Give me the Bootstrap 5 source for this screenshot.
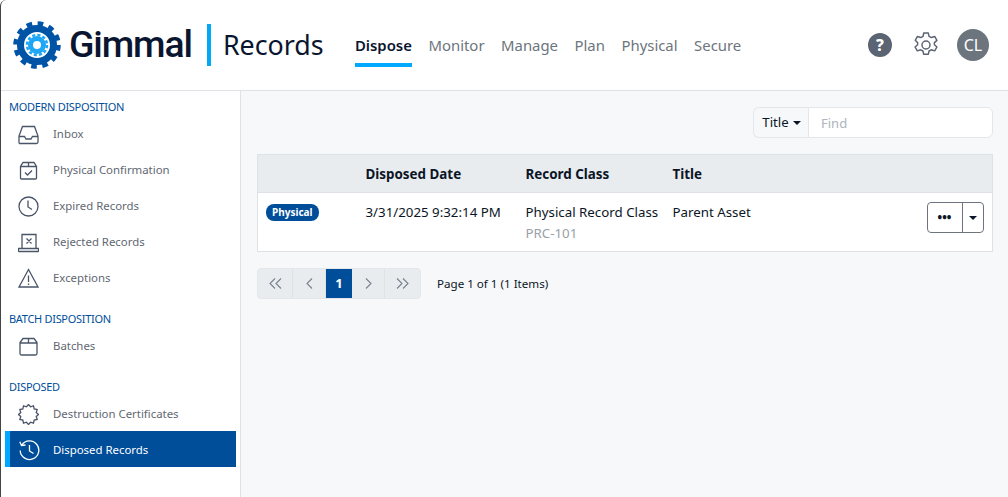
<!DOCTYPE html>
<html lang="en">
<head>
<meta charset="utf-8">
<title>Gimmal Records</title>
<link href="https://cdn.jsdelivr.net/npm/bootstrap@5.3.0/dist/css/bootstrap.min.css" rel="stylesheet">
<style>
html,body{height:100%;overflow:hidden}
body{font-family:"Noto Sans","Open Sans",sans-serif;font-size:13.3px;color:#0b1526;background:#fff}
.app-frame{height:497px;display:flex;flex-direction:column;border-left:1px solid #444;border-top-left-radius:6px}
.top-bar{height:91px;flex:none;border-bottom:1px solid #dee2e6;padding-left:11px;padding-right:19px}
.brand-name{font-family:Roboto,"Liberation Sans",sans-serif;font-weight:500;font-size:37.3px;letter-spacing:-1.1px;color:#0a1630;line-height:1;margin-left:7px}
.brand-rule{width:4px;height:42px;background:#00a9f4;margin-left:15px;margin-right:12px}
.brand-app{font-size:26.8px;line-height:1;color:#0a1630;width:132px}
.main-nav{gap:16.5px;height:91px}
.main-nav a{font-size:14.9px;color:#6c757d;text-decoration:none;height:91px;padding-top:34px;line-height:22px;position:relative}
.main-nav a.on{color:#0a1630;font-weight:600}
.main-nav a.on::after{content:"";position:absolute;left:0;right:0;top:63px;height:4px;background:#00a9ff}
.round-help{width:24px;height:24px;border-radius:50%;background:#5b6472;color:#fff;font-weight:800;font-size:16px;line-height:24px;text-align:center;margin-right:3px}
.round-user{width:32px;height:32px;border-radius:50%;background:#6c757d;color:#fff;font-size:16px;line-height:32px;text-align:center}
.tool-gap{gap:15px}
.body-area{flex:1;min-height:0}
.side-col{width:240px;flex:none;border-right:1px solid #dee2e6;padding:8px 4px 0 4px}
.side-head{font-size:11px;letter-spacing:-.3px;line-height:16px;margin-bottom:1px;color:#004e9a;padding-left:4px;text-transform:uppercase;font-weight:400}
.side-item{display:flex;align-items:center;height:36px;padding-left:13px;color:#5f6772;font-size:11.4px;text-decoration:none}
.side-item svg{width:21px;height:21px;flex:none;margin-right:14px;fill:none;stroke:#4a5568;stroke-width:1.3}
.side-item.on{background:#004e9a;color:#fff;border-left:5px solid #00a9ff;padding-left:8px}
.side-item.on svg{stroke:#fff;margin-right:13px;margin-left:1px}
.side-group{margin-bottom:15px}
.side-last .side-head{margin-bottom:0}
.side-last .side-item{padding-top:2px}
.work-col{flex:1;background:#f7f8fa;padding:16px 15px 0 16px;min-width:0}
.find-box{width:240px;height:31px;font-size:13px;margin-bottom:16px}
.find-box .find-btn{width:55px;border:1px solid #e3e6ea;border-right:0;border-radius:6px 0 0 6px;background:#f7f8fa;color:#0b1526;font-size:13.2px;padding:0 0 0 1px;display:flex;align-items:center;justify-content:center;gap:4px}
.find-box input{flex:1;min-width:0;height:31px;border:1px solid #e3e6ea;border-radius:0 6px 6px 0;background:#fff;padding:0 12px;font-size:13px;outline:0}
.find-box input::placeholder{color:#adb5bd}
.caret-d{display:inline-block;border-top:4.5px solid #0b1526;border-left:4.5px solid transparent;border-right:4.5px solid transparent}
.rec-table{table-layout:fixed;width:736px;margin:0;border:1px solid #dee2e6;background:#fff;--bs-table-bg:transparent}
.rec-table th{background:#e9ecef;height:38px;padding:2px 8px 0;font-weight:700;font-size:13.4px;vertical-align:middle;border-bottom:1px solid #dee2e6;color:#0b1526}
.rec-table td{padding:9px 8px 0;height:59px;vertical-align:top;border:0;font-size:13.3px;line-height:20px;color:#0b1526;white-space:nowrap}
.rec-table td.act-cell{padding-right:9px}
.pill-type{display:inline-block;background:#004e9a;color:#fff;font-weight:700;font-size:10px;line-height:17px;height:17px;border-radius:8px;padding:0 6px;vertical-align:top;margin-top:2px}
.sub-code{color:#9aa0a6;margin-top:1px}
.act-group{display:inline-flex;height:31px;border:1px solid #6c757d;border-radius:4px;overflow:hidden;background:#fff}
.act-group span{display:flex;align-items:center;justify-content:center;height:100%}
.act-main{width:35px;border-right:1px solid #6c757d;font-weight:800;font-size:12px}
.act-drop{width:20px}
.pager-line{margin-top:16px;gap:16px}
.pager-set{display:flex;height:31px;border:1px solid #e3e6ea;border-radius:4px;background:#e9ecef;overflow:hidden}
.pager-set span{display:flex;align-items:center;justify-content:center;width:33px;border-right:1px solid #dee2e6}
.pager-set span:last-child{border-right:0;width:35px}
.pager-set span.now{background:#004e9a;color:#fff;width:26px;border-right:0;font-weight:700;font-size:13px}
.pager-set span.wide{width:35px}
.pager-set svg{width:13px;height:13px;fill:none;stroke:#78828d;stroke-width:1.1}
.pager-text{font-size:11.6px;color:#0b1526}
</style>
</head>
<body>
<div class="app-frame">
  <header class="top-bar d-flex align-items-center">
    <svg width="50" height="50" viewBox="0 0 50 50" aria-label="Gimmal logo">
      <circle cx="25" cy="25" r="16.5" fill="none" stroke="#0054a6" stroke-width="7"/>
      <circle cx="25" cy="25" r="21.5" fill="none" stroke="#0054a6" stroke-width="4.500" stroke-dasharray="5.630 5.630"/>
      <circle cx="25" cy="25" r="6.500" fill="none" stroke="#1ea7f5" stroke-width="5"/>
      <circle cx="25" cy="25" r="10" fill="none" stroke="#1ea7f5" stroke-width="2.500" stroke-dasharray="3.140 2.100"/>
    </svg>
    <span class="brand-name">Gimmal</span>
    <span class="brand-rule"></span>
    <span class="brand-app">Records</span>
    <nav class="main-nav d-flex">
      <a href="#" class="on">Dispose</a><a href="#">Monitor</a><a href="#">Manage</a><a href="#">Plan</a><a href="#">Physical</a><a href="#">Secure</a>
    </nav>
    <div class="ms-auto d-flex align-items-center tool-gap">
      <div class="round-help">?</div>
      <svg width="32" height="32" viewBox="0 0 24 24" fill="none" stroke="#5b6472" stroke-width="1.100" stroke-linejoin="round"><circle cx="12" cy="12" r="3"/><path d="M10.300 3h3.400l.6 2.500 1.700.9 2.500-.8 1.700 2.900-1.900 1.700v1.600l1.900 1.700-1.700 2.900-2.500-.8-1.700.9-.6 2.500h-3.400l-.6-2.500-1.700-.9-2.500.8-1.700-2.900 1.900-1.700v-1.600L3.900 8.500l1.700-2.900 2.500.8 1.700-.9z"/></svg>
      <div class="round-user">CL</div>
    </div>
  </header>
  <div class="body-area d-flex">
    <aside class="side-col">
      <div class="side-group">
        <div class="side-head">Modern Disposition</div>
        <a class="side-item" href="#"><svg viewBox="0 0 21 21"><path d="M4.500 2.500h12l3.500 9.500v6a1.500 1.500 0 0 1-1.500 1.500h-17A1.500 1.500 0 0 1 1 18v-6zM1 12.500h5.500l1.500 2.500h5l1.500-2.500H20"/></svg>Inbox</a>
        <a class="side-item" href="#"><svg viewBox="0 0 21 21"><path d="M5 2.500h11l2.500 4v11.500a1 1 0 0 1-1 1h-14a1 1 0 0 1-1-1V6.500zM2.500 6.500h16M10.500 2.500v4M7 12.500l2.500 2.500 4.500-4.500"/></svg>Physical Confirmation</a>
        <a class="side-item" href="#"><svg viewBox="0 0 21 21"><circle cx="10.500" cy="10.500" r="9.500"/><path d="M10 4.500v6.500l4 2.500"/></svg>Expired Records</a>
        <a class="side-item" href="#"><svg viewBox="0 0 21 21"><path d="M4 16V2.500h14V16M.500 16.500h20v2.500a.5.5 0 0 1-.5.5H1a.5.5 0 0 1-.5-.5zM8.500 6.500l5 5M13.500 6.500l-5 5"/></svg>Rejected Records</a>
        <a class="side-item" href="#"><svg viewBox="0 0 21 21"><path d="M10.500 1.500l9.500 17.500H1zM10.500 7.500v6.500M10.500 15.500v1.500"/></svg>Exceptions</a>
      </div>
      <div class="side-group">
        <div class="side-head">Batch Disposition</div>
        <a class="side-item" href="#"><svg viewBox="0 0 21 21"><path d="M5 2.500h11l3 4v11a1.500 1.500 0 0 1-1.500 1.500h-14A1.500 1.500 0 0 1 2 17.500v-11zM2 7h17M10.500 2.500V7"/></svg>Batches</a>
      </div>
      <div class="side-last">
        <div class="side-head">Disposed</div>
        <a class="side-item" href="#"><svg viewBox="0 0 21 21" stroke-width="1.100"><polygon points="20.500,10.500 18.230,12.570 19.160,15.500 16.160,16.160 15.500,19.160 12.570,18.230 10.500,20.500 8.430,18.230 5.500,19.160 4.840,16.160 1.840,15.500 2.770,12.570 .5,10.500 2.770,8.430 1.840,5.500 4.840,4.840 5.500,1.840 8.430,2.770 10.500,.5 12.570,2.770 15.500,1.840 16.160,4.840 19.160,5.500 18.230,8.430"/></svg>Destruction Certificates</a>
        <a class="side-item on" href="#"><svg viewBox="0 0 21 21"><path d="M2.800 5A9.300 9.300 0 1 1 1.200 10.500M.800 1.800L2.500 5.500l4-.500M10.500 5v6l4 2.500"/></svg>Disposed Records</a>
      </div>
    </aside>
    <main class="work-col">
      <div class="d-flex justify-content-end">
        <div class="find-box d-flex">
          <button class="find-btn" type="button">Title <i class="caret-d"></i></button>
          <input type="text" placeholder="Find">
        </div>
      </div>
      <table class="table rec-table">
        <colgroup><col style="width:100px"><col style="width:160px"><col style="width:147px"><col><col style="width:74px"></colgroup>
        <thead><tr><th></th><th>Disposed Date</th><th>Record Class</th><th>Title</th><th></th></tr></thead>
        <tbody><tr>
          <td><span class="pill-type">Physical</span></td>
          <td>3/31/2025 9:32:14 PM</td>
          <td>Physical Record Class<div class="sub-code">PRC-101</div></td>
          <td>Parent Asset</td>
          <td class="text-end act-cell"><div class="act-group"><span class="act-main">•••</span><span class="act-drop"><i class="caret-d"></i></span></div></td>
        </tr></tbody>
      </table>
      <div class="pager-line d-flex align-items-center">
        <div class="pager-set">
          <span class="wide"><svg viewBox="0 0 13 13"><path d="M6 1.500L1 6.500l5 5M12 1.500L7 6.500l5 5"/></svg></span>
          <span><svg viewBox="0 0 13 13"><path d="M9 1.500L4 6.500l5 5"/></svg></span>
          <span class="now">1</span>
          <span><svg viewBox="0 0 13 13"><path d="M4 1.500l5 5-5 5"/></svg></span>
          <span><svg viewBox="0 0 13 13"><path d="M1 1.500l5 5-5 5M7 1.500l5 5-5 5"/></svg></span>
        </div>
        <div class="pager-text">Page 1 of 1 (1 Items)</div>
      </div>
    </main>
  </div>
</div>
<script src="https://cdn.jsdelivr.net/npm/bootstrap@5.3.0/dist/js/bootstrap.bundle.min.js"></script>
</body>
</html>
